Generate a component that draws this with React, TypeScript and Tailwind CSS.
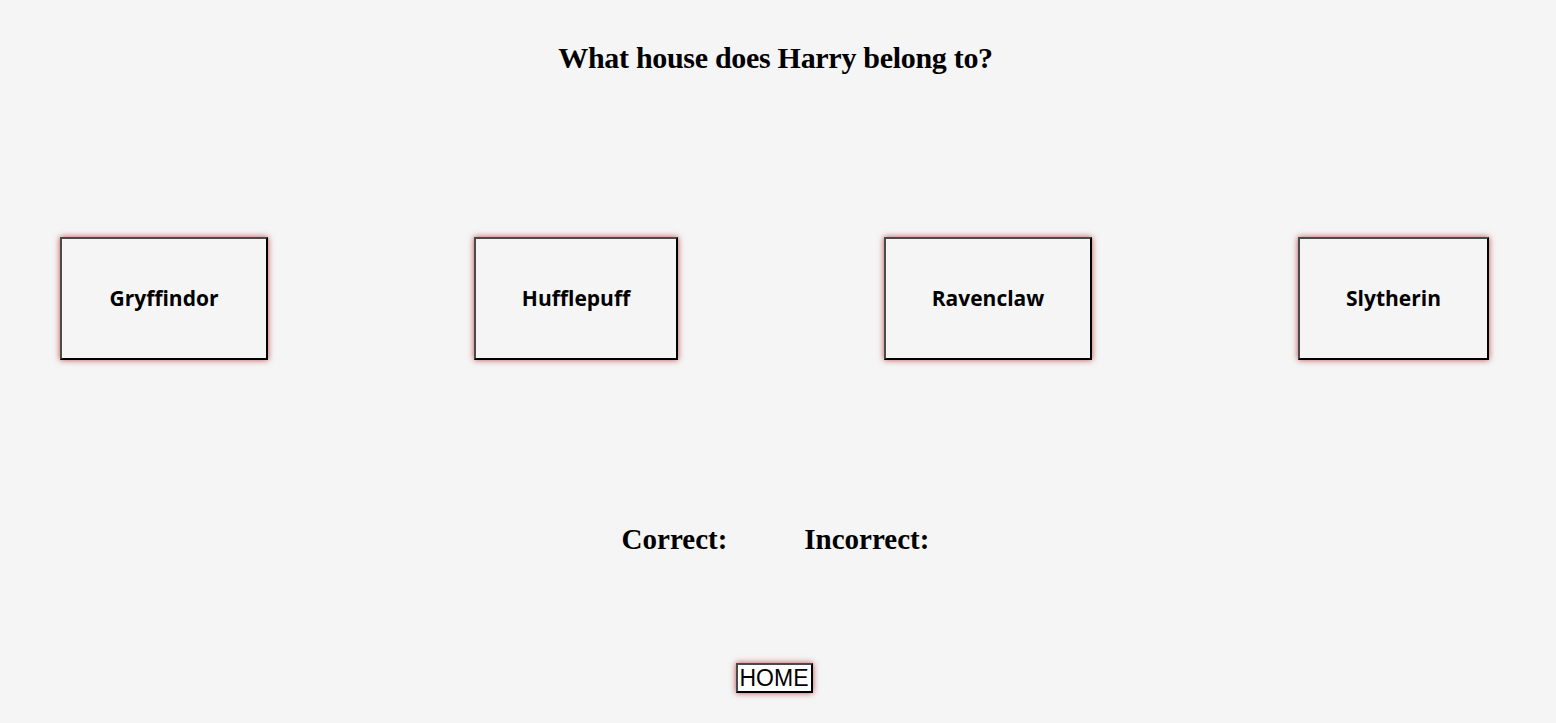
import React from "react";

const houses = [
  { name: "Gryffindor", w: "w-[208px]" },
  { name: "Hufflepuff", w: "w-[204px]" },
  { name: "Ravenclaw", w: "w-[208px]" },
  { name: "Slytherin", w: "w-[191px]" },
];

export default function App() {
  return (
    <div className="min-h-[723px] w-full bg-[#f5f5f5] text-black flex flex-col items-center pr-[5px]">
      <h1 className="mt-[38px] text-[30px] leading-[40px] font-bold tracking-[-0.3px] [font-family:'Liberation_Serif',serif]">
        What house does Harry belong to?
      </h1>
      <div className="mt-[159px] w-full flex pl-[60px] gap-[206px]">
        {houses.map((h) => (
          <button
            key={h.name}
            className={`${h.w} h-[123px] bg-[#f5f5f5] border-2 border-solid border-t-[#4a4a4a] border-l-[#4a4a4a] border-r-black border-b-black shadow-[0_0_6px_rgba(170,20,20,0.75)] text-[21px] font-bold [font-family:'Open_Sans',sans-serif]`}
          >
            {h.name}
          </button>
        ))}
      </div>
      <div className="mt-[159px] flex gap-[77px] text-[29px] leading-[40px] font-bold [font-family:'Liberation_Serif',serif]">
        <span>Correct:</span>
        <span>Incorrect:</span>
      </div>
      <button className="mt-[104px] mr-[3px] h-[30px] w-[77px] bg-white border-2 border-solid border-t-[#4a4a4a] border-l-[#4a4a4a] border-r-black border-b-black shadow-[0_0_6px_rgba(170,20,20,0.75)] text-[23px] leading-[24px] [font-family:'Liberation_Sans',sans-serif]">
        HOME
      </button>
    </div>
  );
}
